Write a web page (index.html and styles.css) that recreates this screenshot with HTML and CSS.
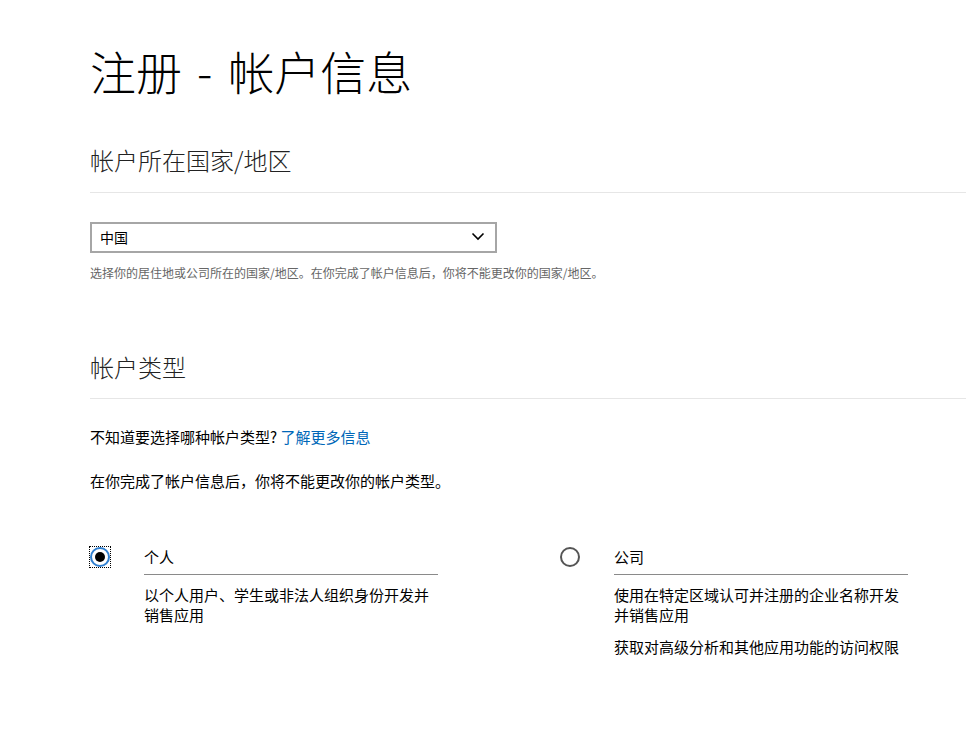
FILE: index.html
```html
<!DOCTYPE html>
<html lang="zh-CN">
<head>
<meta charset="utf-8">
<title>注册 - 帐户信息</title>
<link rel="stylesheet" href="styles.css">
</head>
<body>
<main class="page">
  <h1 class="title">注册<span class="sep">-</span>帐户信息</h1>

  <section class="section">
    <h2 class="section-title">帐户所在国家/地区</h2>
    <div class="select">
      <span class="select-value">中国</span>
      <svg class="chevron" width="14" height="9" viewBox="0 0 14 9"><polyline points="1.5,1.5 7,7 12.5,1.5" fill="none" stroke="#000" stroke-width="1.6"/></svg>
    </div>
    <p class="hint">选择你的居住地或公司所在的国家/地区。在你完成了帐户信息后，你将不能更改你的国家/地区。</p>
  </section>

  <section class="section section-type">
    <h2 class="section-title">帐户类型</h2>
    <p class="text text-first">不知道要选择哪种帐户类型? <a class="link" href="#">了解更多信息</a></p>
    <p class="text text-second">在你完成了帐户信息后，你将不能更改你的帐户类型。</p>

    <div class="cards">
      <div class="card card-first">
        <div class="radio-wrap"><span class="focus-box"><span class="radio checked"></span></span></div>
        <div class="card-body">
          <div class="card-label">个人</div>
          <p class="card-desc">以个人用户、学生或非法人组织身份开发并销售应用</p>
        </div>
      </div>
      <div class="card">
        <div class="radio-wrap"><span class="plain-box"><span class="radio"></span></span></div>
        <div class="card-body">
          <div class="card-label">公司</div>
          <p class="card-desc">使用在特定区域认可并注册的企业名称开发并销售应用</p>
          <p class="card-desc card-extra">获取对高级分析和其他应用功能的访问权限</p>
        </div>
      </div>
    </div>
  </section>
</main>
</body>
</html>
```

FILE: styles.css
```css
html, body {
  margin: 0;
  padding: 0;
  background: #fff;
}
body {
  font-family: "Noto Sans CJK SC", "Noto Sans", sans-serif;
  color: #000;
  overflow: hidden;
}
.page {
  padding-left: 90px;
}
.title {
  margin: 40px 0 0;
  font-size: 46px;
  line-height: 60px;
  font-weight: 300;
  color: #000;
}
.sep {
  margin: 0 16px 0 15px;
}
.section-title {
  margin: 44px 0 0;
  padding-bottom: 16px;
  border-bottom: 1px solid #e6e6e6;
  font-size: 24px;
  line-height: 32px;
  font-weight: 300;
  color: #222;
}
.select {
  margin-top: 29px;
  width: 407px;
  height: 31px;
  box-sizing: border-box;
  border: 2px solid #a6a6a6;
  display: flex;
  align-items: center;
  justify-content: space-between;
  padding: 0 10px 2px 8px;
}
.select-value {
  font-size: 14px;
  line-height: 20px;
  color: #000;
}
.chevron {
  display: block;
}
.hint {
  margin: 12px 0 0;
  font-size: 12px;
  line-height: 16px;
  color: #666;
}
.section-type .section-title {
  margin-top: 70px;
  padding-bottom: 15px;
}
.text {
  margin: 0;
  font-size: 15px;
  line-height: 20px;
  color: #000;
}
.text-first {
  margin-top: 28px;
}
.text-second {
  margin-top: 24px;
}
.link {
  color: #0067b8;
  text-decoration: none;
}
.cards {
  margin-top: 56px;
  display: flex;
}
.card {
  display: flex;
  flex: none;
}
.card-first {
  width: 470px;
}
.radio-wrap {
  width: 54px;
  flex: none;
}
.focus-box,
.plain-box {
  display: block;
  width: 22px;
  height: 22px;
  box-sizing: border-box;
  padding: 1px;
  margin: -1px 0 0 -1px;
}
.focus-box {
  border: 1px dotted #000;
  padding: 0;
}
.radio {
  display: block;
  width: 20px;
  height: 20px;
  box-sizing: border-box;
  border: 2px solid #555;
  border-radius: 50%;
  position: relative;
}
.radio.checked {
  border-color: #2f7fd0;
}
.radio.checked::after {
  content: "";
  position: absolute;
  left: 3px;
  top: 3px;
  width: 10px;
  height: 10px;
  border-radius: 50%;
  background: #000;
}
.card-body {
  width: 294px;
}
.card-label {
  font-size: 15px;
  line-height: 20px;
  padding-bottom: 7px;
  border-bottom: 1px solid #8a8a8a;
  color: #000;
}
.card-desc {
  margin: 10px 0 0;
  font-size: 15px;
  line-height: 20px;
  color: #000;
}
.card-extra {
  margin-top: 12px;
}
```
